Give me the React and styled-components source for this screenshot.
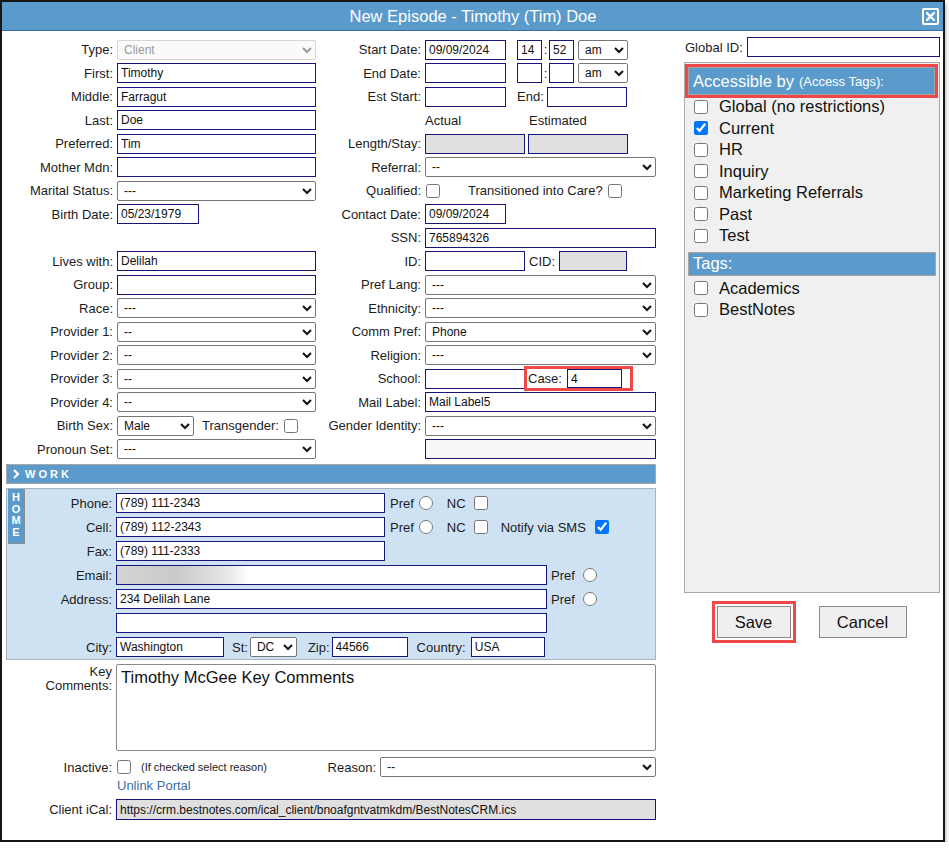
import React from 'react';
import styled, { createGlobalStyle } from 'styled-components';

const BLUE = '#5b9bcb';
const NAVY = '#16167a';

const GlobalStyle = createGlobalStyle`
  html, body { margin: 0; padding: 0; background: #fff; }
  body {
    font-family: "Liberation Sans", Arial, sans-serif;
    font-size: 13px;
    color: #1c1c1c;
  }
  * { box-sizing: border-box; }
`;

const Dialog = styled.div`
  width: 945px;
  height: 842px;
  border: 2px solid #161616;
  background: #fff;
  box-shadow: 0 3px 5px rgba(0, 0, 0, 0.4);
  display: flex;
  flex-direction: column;
  overflow: hidden;
`;

const TitleBar = styled.div`
  flex: none;
  height: 29px;
  background: ${BLUE};
  border-bottom: 1px solid #3a6d99;
  display: grid;
  grid-template-columns: 1fr auto 1fr;
  align-items: center;
  padding: 0 4px 0 5px;
  color: #fff;
  font-size: 16.5px;
`;

const Title = styled.div`
  grid-column: 2;
  white-space: nowrap;
`;

const CloseButton = styled.button`
  grid-column: 3;
  justify-self: end;
  width: 17px;
  height: 17px;
  padding: 0;
  border: 2px solid #fff;
  border-radius: 2px;
  background: transparent;
  display: flex;
  align-items: center;
  justify-content: center;
  cursor: pointer;
`;

const Body = styled.div`
  display: flex;
  gap: 28px;
  padding: 6px 3px 0 4px;
`;

const LeftPane = styled.div`
  width: 650px;
  display: flex;
  flex-direction: column;
`;

const TopGrid = styled.div`
  display: grid;
  grid-template-columns: 107px 199px 101px 231px;
  grid-auto-rows: 23.5px;
  column-gap: 4px;
  align-items: center;
  margin-top: 1px;
`;

const Label = styled.label`
  text-align: right;
  white-space: nowrap;
  align-self: ${p => (p.$top ? 'start' : 'center')};
  line-height: ${p => (p.$top ? '14px' : 'normal')};
  padding-top: ${p => (p.$top ? '1px' : '0')};
`;

const Text = styled.span`
  white-space: nowrap;
  margin-left: ${p => p.$ml || 0}px;
  width: ${p => (p.$w ? p.$w + 'px' : 'auto')};
  flex: none;
`;

const Inline = styled.div`
  display: flex;
  align-items: center;
  min-width: 0;
`;

const Input = styled.input`
  flex: none;
  height: ${p => p.$h || 20}px;
  width: ${p => (p.$w ? p.$w + 'px' : '100%')};
  margin: 0 0 0 ${p => p.$ml || 0}px;
  border: 1px solid ${NAVY};
  border-radius: 0;
  padding: 0 3px;
  font-family: "Liberation Sans", Arial, sans-serif;
  font-size: 12px;
  color: #111;
  background: ${p =>
    p.$blur
      ? 'linear-gradient(to right, #d4d4d4 0, #cacaca 60px, #e6e6e6 110px, #fff 132px)'
      : p.$bg || '#fff'};
  outline: none;
`;

const Select = styled.select`
  flex: none;
  height: 20px;
  width: ${p => (p.$w ? p.$w + 'px' : '100%')};
  margin: 0 0 0 ${p => p.$ml || 0}px;
  border: 1px solid ${p => (p.disabled ? '#d6d6d6' : '#767676')};
  border-radius: 2px;
  padding: 0 0 0 2px;
  font-family: "Liberation Sans", Arial, sans-serif;
  font-size: 12px;
  color: ${p => (p.disabled ? '#9a9a9a' : '#111')};
  background: ${p => (p.disabled ? '#fafafa' : '#fff')};
  opacity: 1;
`;

const Check = styled.input.attrs({ type: 'checkbox' })`
  flex: none;
  width: 14px;
  height: 14px;
  margin: 0 0 0 ${p => p.$ml || 0}px;
`;

const Radio = styled.input.attrs({ type: 'radio' })`
  flex: none;
  width: 14px;
  height: 14px;
  margin: 0 0 0 ${p => p.$ml || 0}px;
`;

const Colon = styled.span`
  width: 7px;
  text-align: center;
  flex: none;
`;

const Highlight = styled.div`
  display: flex;
  align-items: center;
  border: 3px solid #f04848;
  padding: ${p => p.$pad || '0'};
  margin-left: ${p => p.$ml || 0}px;
  flex: none;
`;

const WorkBar = styled.div`
  margin-top: 3px;
  height: 20px;
  background: ${BLUE};
  border: 1px solid #a6a6a6;
  display: flex;
  align-items: center;
  gap: 5px;
  padding-left: 5px;
  color: #fff;
  font-weight: bold;
  font-size: 11px;
  letter-spacing: 3px;
`;

const HomeSection = styled.div`
  margin-top: 4px;
  background: #cfe2f3;
  border: 1px solid #a9b4bf;
  display: flex;
  align-items: flex-start;
`;

const HomeTab = styled.div`
  flex: none;
  width: 17px;
  height: 55px;
  margin-left: 1px;
  background: ${BLUE};
  border-right: 1px solid #8d8d8d;
  border-bottom: 1px solid #8d8d8d;
  color: #fff;
  font-weight: bold;
  font-size: 11px;
  line-height: 11.5px;
  display: flex;
  flex-direction: column;
  align-items: center;
  padding-top: 3px;
`;

const HomeGrid = styled.div`
  display: grid;
  grid-template-columns: 87px 1fr;
  grid-auto-rows: 24px;
  column-gap: 4px;
  align-items: center;
  padding: 2px 0 0;
  flex: 1;
`;

const BottomGrid = styled.div`
  display: grid;
  grid-template-columns: 106px 540px;
  column-gap: 4px;
  margin-top: 4px;
`;

const Comments = styled.textarea`
  width: 540px;
  height: 87px;
  resize: none;
  border: 1px solid #8a8a8a;
  border-radius: 2px;
  padding: 3px 4px;
  font-family: "Liberation Sans", Arial, sans-serif;
  font-size: 16.5px;
  color: #111;
  margin: 0;
`;

const BottomRow = styled.div`
  grid-column: 2;
  display: flex;
  align-items: center;
  height: ${p => p.$h}px;
  margin-top: ${p => p.$mt || 0}px;
`;

const BottomLabel = styled(Label)`
  grid-column: 1;
  height: ${p => p.$h}px;
  margin-top: ${p => p.$mt || 0}px;
  display: flex;
  align-items: center;
  justify-content: flex-end;
`;

const Small = styled.span`
  font-size: 11px;
  margin-left: 10px;
  white-space: nowrap;
`;

const Spacer = styled.div`
  flex: 1;
`;

const PortalLink = styled.a`
  color: #3f6c9e;
  text-decoration: none;
  font-size: 13px;
  margin-left: 1px;
`;

const RightPane = styled.div`
  width: 256px;
  display: flex;
  flex-direction: column;
`;

const GlobalRow = styled.div`
  display: flex;
  align-items: center;
  padding-left: 1px;
`;

const TagPanel = styled.div`
  margin-top: 5px;
  height: 531px;
  background: #f0f0f0;
  border: 1px solid #a9a9a9;
  padding: 0 3px;
`;

const AccessHighlight = styled.div`
  border: 3px solid #f04848;
  margin: 1px -2px 0 -3px;
`;

const PanelHeader = styled.div`
  height: ${p => p.$h}px;
  margin-top: ${p => p.$mt || 0}px;
  background: ${BLUE};
  border: 1px solid #a5a5a5;
  color: #fff;
  font-size: 16.5px;
  display: flex;
  align-items: center;
  padding-left: 4px;
  white-space: nowrap;
`;

const HeaderSub = styled.span`
  font-size: 13px;
  margin-left: 5px;
`;

const TagList = styled.div`
  display: flex;
  flex-direction: column;
  margin-top: ${p => p.$mt || 0}px;
`;

const TagItem = styled.label`
  display: flex;
  align-items: center;
  height: 21.5px;
  font-size: 16.5px;
  gap: 11px;
  padding-left: 6px;
  color: #111;
`;

const ButtonRow = styled.div`
  display: flex;
  justify-content: center;
  align-items: center;
  gap: 23px;
  margin-top: 8px;
  padding-right: 6px;
`;

const Button = styled.button`
  width: ${p => p.$w}px;
  height: 32px;
  background: #efefef;
  border: 1px solid #8a8a8a;
  border-radius: 0;
  font-family: "Liberation Sans", Arial, sans-serif;
  font-size: 16.5px;
  color: #111;
  cursor: pointer;
`;

const Chevron = () => (
  <svg width="8" height="10" viewBox="0 0 8 10">
    <polyline points="2,1 6,5 2,9" fill="none" stroke="#fff" strokeWidth="2.2" />
  </svg>
);

const CloseIcon = () => (
  <svg width="9" height="9" viewBox="0 0 9 9">
    <path d="M1 1 L8 8 M8 1 L1 8" stroke="#fff" strokeWidth="2.4" strokeLinecap="square" />
  </svg>
);

const Sel = ({ value, ...rest }) => (
  <Select defaultValue={value} {...rest}>
    <option>{value}</option>
  </Select>
);

const accessTags = [
  { name: 'Global (no restrictions)' },
  { name: 'Current', checked: true },
  { name: 'HR' },
  { name: 'Inquiry' },
  { name: 'Marketing Referrals' },
  { name: 'Past' },
  { name: 'Test' },
];

const tags = ['Academics', 'BestNotes'];

const App = () => {
  return (
    <>
      <GlobalStyle />
      <Dialog>
        <TitleBar>
          <Title>New Episode - Timothy (Tim) Doe</Title>
          <CloseButton aria-label="Close">
            <CloseIcon />
          </CloseButton>
        </TitleBar>

        <Body>
          <LeftPane>
            <TopGrid>
              <Label>Type:</Label>
              <Sel value="Client" disabled />
              <Label>Start Date:</Label>
              <Inline>
                <Input $w={81} defaultValue="09/09/2024" />
                <Input $w={25} $ml={11} defaultValue="14" />
                <Colon>:</Colon>
                <Input $w={25} defaultValue="52" />
                <Sel $w={50} $ml={4} value="am" />
              </Inline>

              <Label>First:</Label>
              <Input defaultValue="Timothy" />
              <Label>End Date:</Label>
              <Inline>
                <Input $w={81} />
                <Input $w={25} $ml={11} />
                <Colon>:</Colon>
                <Input $w={25} />
                <Sel $w={50} $ml={4} value="am" />
              </Inline>

              <Label>Middle:</Label>
              <Input defaultValue="Farragut" />
              <Label>Est Start:</Label>
              <Inline>
                <Input $w={81} />
                <Text $ml={11}>End:</Text>
                <Input $w={80} $ml={3} />
              </Inline>

              <Label>Last:</Label>
              <Input defaultValue="Doe" />
              <span />
              <Inline>
                <Text $w={104}>Actual</Text>
                <Text>Estimated</Text>
              </Inline>

              <Label>Preferred:</Label>
              <Input defaultValue="Tim" />
              <Label>Length/Stay:</Label>
              <Inline>
                <Input $w={100} $bg="#e0e0e0" readOnly />
                <Input $w={100} $ml={3} $bg="#e0e0e0" readOnly />
              </Inline>

              <Label>Mother Mdn:</Label>
              <Input />
              <Label>Referral:</Label>
              <Sel value="--" />

              <Label>Marital Status:</Label>
              <Sel value="---" />
              <Label>Qualified:</Label>
              <Inline>
                <Check $ml={1} />
                <Text $ml={28}>Transitioned into Care?</Text>
                <Check $ml={5} />
              </Inline>

              <Label>Birth Date:</Label>
              <Input $w={82} defaultValue="05/23/1979" />
              <Label>Contact Date:</Label>
              <Input $w={81} defaultValue="09/09/2024" />

              <span />
              <span />
              <Label>SSN:</Label>
              <Input defaultValue="765894326" />

              <Label>Lives with:</Label>
              <Input defaultValue="Delilah" />
              <Label>ID:</Label>
              <Inline>
                <Input $w={100} />
                <Text $ml={4}>CID:</Text>
                <Input $w={68} $ml={4} $bg="#e0e0e0" readOnly />
              </Inline>

              <Label>Group:</Label>
              <Input />
              <Label>Pref Lang:</Label>
              <Sel value="---" />

              <Label>Race:</Label>
              <Sel value="---" />
              <Label>Ethnicity:</Label>
              <Sel value="---" />

              <Label>Provider 1:</Label>
              <Sel value="--" />
              <Label>Comm Pref:</Label>
              <Sel value="Phone" />

              <Label>Provider 2:</Label>
              <Sel value="--" />
              <Label>Religion:</Label>
              <Sel value="---" />

              <Label>Provider 3:</Label>
              <Sel value="--" />
              <Label>School:</Label>
              <Inline>
                <Input $w={100} />
                <Highlight $ml={-1} $pad="0 8px 0 1px">
                  <Text>Case:</Text>
                  <Input $w={55} $ml={5} $h={19} defaultValue="4" />
                </Highlight>
              </Inline>

              <Label>Provider 4:</Label>
              <Sel value="--" />
              <Label>Mail Label:</Label>
              <Input defaultValue="Mail Label5" />

              <Label>Birth Sex:</Label>
              <Inline>
                <Sel $w={77} value="Male" />
                <Text $ml={8}>Transgender:</Text>
                <Check $ml={5} />
              </Inline>
              <Label>Gender Identity:</Label>
              <Sel value="---" />

              <Label>Pronoun Set:</Label>
              <Sel value="---" />
              <span />
              <Input $bg="#f8f8f8" />
            </TopGrid>

            <WorkBar>
              <Chevron />
              WORK
            </WorkBar>

            <HomeSection>
              <HomeTab>
                <span>H</span>
                <span>O</span>
                <span>M</span>
                <span>E</span>
              </HomeTab>
              <HomeGrid>
                <Label>Phone:</Label>
                <Inline>
                  <Input $w={269} defaultValue="(789) 111-2343" />
                  <Text $ml={5}>Pref</Text>
                  <Radio $ml={5} name="pp" />
                  <Text $ml={14}>NC</Text>
                  <Check $ml={8} />
                </Inline>

                <Label>Cell:</Label>
                <Inline>
                  <Input $w={269} defaultValue="(789) 112-2343" />
                  <Text $ml={5}>Pref</Text>
                  <Radio $ml={5} name="pp" />
                  <Text $ml={14}>NC</Text>
                  <Check $ml={8} />
                  <Text $ml={13}>Notify via SMS</Text>
                  <Check $ml={9} defaultChecked />
                </Inline>

                <Label>Fax:</Label>
                <Inline>
                  <Input $w={269} defaultValue="(789) 111-2333" />
                </Inline>

                <Label>Email:</Label>
                <Inline>
                  <Input $w={431} $blur readOnly />
                  <Text $ml={4}>Pref</Text>
                  <Radio $ml={8} name="pe" />
                </Inline>

                <Label>Address:</Label>
                <Inline>
                  <Input $w={431} defaultValue="234 Delilah Lane" />
                  <Text $ml={4}>Pref</Text>
                  <Radio $ml={8} name="pa" />
                </Inline>

                <span />
                <Inline>
                  <Input $w={431} />
                </Inline>

                <Label>City:</Label>
                <Inline>
                  <Input $w={108} defaultValue="Washington" />
                  <Text $ml={8}>St:</Text>
                  <Sel $w={47} $ml={2} value="DC" />
                  <Text $ml={11}>Zip:</Text>
                  <Input $w={76} $ml={2} defaultValue="44566" />
                  <Text $ml={9}>Country:</Text>
                  <Input $w={74} $ml={5} defaultValue="USA" />
                </Inline>
              </HomeGrid>
            </HomeSection>

            <BottomGrid>
              <Label $top>
                Key
                <br />
                Comments:
              </Label>
              <Comments defaultValue="Timothy McGee Key Comments" />

              <BottomLabel $h={20} $mt={6}>Inactive:</BottomLabel>
              <BottomRow $h={20} $mt={6}>
                <Check $ml={1} />
                <Small>(If checked select reason)</Small>
                <Spacer />
                <Text>Reason:</Text>
                <Sel $w={276} $ml={4} value="--" />
              </BottomRow>

              <BottomRow $h={16}>
                <PortalLink href="#">Unlink Portal</PortalLink>
              </BottomRow>

              <BottomLabel $h={21} $mt={6}>Client iCal:</BottomLabel>
              <BottomRow $h={21} $mt={6}>
                <Input
                  $h={21}
                  $bg="#e0e0e0"
                  readOnly
                  defaultValue="https://crm.bestnotes.com/ical_client/bnoafgntvatmkdm/BestNotesCRM.ics"
                />
              </BottomRow>
            </BottomGrid>
          </LeftPane>

          <RightPane>
            <GlobalRow>
              <Text>Global ID:</Text>
              <Input $w={193} $ml={4} />
            </GlobalRow>

            <TagPanel>
              <AccessHighlight>
                <PanelHeader $h={28}>
                  Accessible by<HeaderSub>(Access Tags):</HeaderSub>
                </PanelHeader>
              </AccessHighlight>
              <TagList $mt={-2}>
                {accessTags.map(tag => (
                  <TagItem key={tag.name}>
                    <Check defaultChecked={tag.checked} />
                    {tag.name}
                  </TagItem>
                ))}
              </TagList>
              <PanelHeader $h={24} $mt={5}>Tags:</PanelHeader>
              <TagList $mt={2}>
                {tags.map(tag => (
                  <TagItem key={tag}>
                    <Check />
                    {tag}
                  </TagItem>
                ))}
              </TagList>
            </TagPanel>

            <ButtonRow>
              <Highlight $pad="2px">
                <Button $w={74}>Save</Button>
              </Highlight>
              <Button $w={88}>Cancel</Button>
            </ButtonRow>
          </RightPane>
        </Body>
      </Dialog>
    </>
  );
};

export default App;
